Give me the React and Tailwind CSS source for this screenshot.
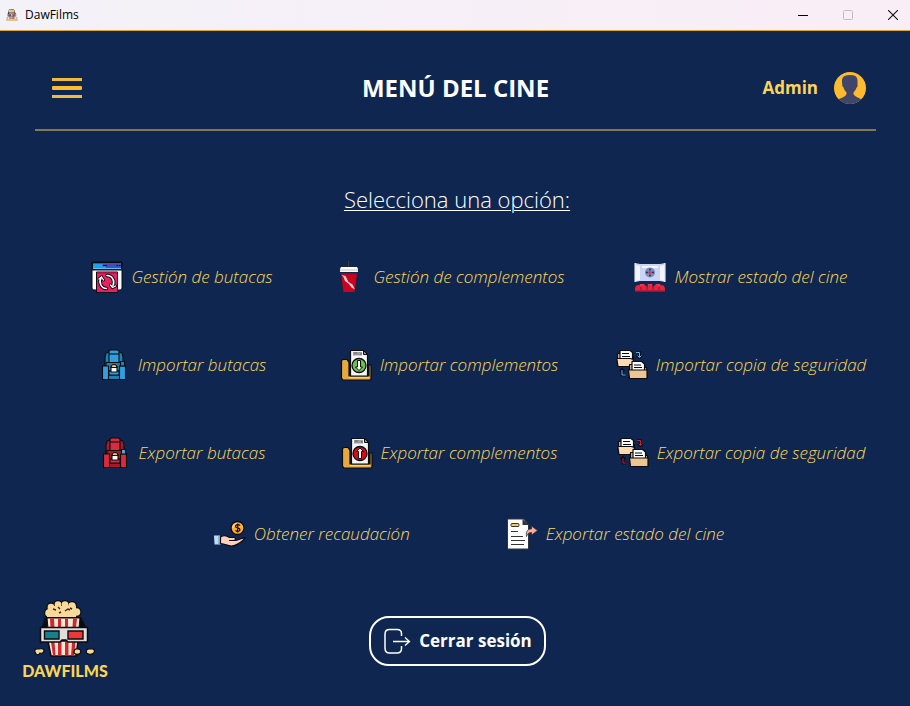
import React from "react";

const ink = "#0b0b12";

function Icon({ children }) {
  return (
    <svg viewBox="0 0 32 32" className="size-8 shrink-0" aria-hidden="true">
      {children}
    </svg>
  );
}

function SeatsManageIcon() {
  return (
    <Icon>
      <path d="M1 1h30v26a2 2 0 0 1-2 2H3a2 2 0 0 1-2-2z" fill="#fff" stroke={ink} />
      <path d="M1.500 1.500h29v7h-29z" fill="#3f51b5" stroke={ink} />
      <path d="M2 3h9.500v2.500H15V8H2z" fill="#1ea0ee" />
      <path d="M12 4.500h4" stroke={ink} />
      <path d="M25.500 4.500h1.500M28 4.500h1.500" stroke={ink} />
      <path d="M2 7.500h28" stroke="#4dc3ff" strokeWidth="1" />
      <path d="M1 9h30" stroke={ink} />
      <path d="M5.500 11h21v20.500h-21z" fill="#f01d62" stroke={ink} />
      <path d="M6 11.500h20V13H6z" fill="#c2185b" />
      <g fill="none" strokeLinecap="round">
        <path d="M10 17c-2.500 4 0 10.500 5.500 10.500M16 14.500c5.500 0 8 5.500 6 10" stroke={ink} strokeWidth="3.500" />
        <path d="M8 18l2.500-2 2 3M24.500 25l-3 1.500-2-2.500" stroke={ink} strokeWidth="3" />
        <path d="M10 17c-2.500 4 0 10.500 5.500 10.500M16 14.500c5.500 0 8 5.500 6 10" stroke="#fff" strokeWidth="1.600" />
        <path d="M8 18l2.500-2 2 3M24.500 25l-3 1.500-2-2.500" stroke="#fff" strokeWidth="1.300" />
      </g>
    </Icon>
  );
}

function SeatIcon({ body, dark, cup }) {
  return (
    <Icon>
      <g stroke={ink} strokeWidth="1.100">
        <path d="M8 4l4-1v14H7V8z" fill={dark} />
        <path d="M24 4l-4-1v14h5V8z" fill={dark} />
        <path d="M11 2l1.500-1h7L21 2v14H11z" fill={body} />
        <path d="M11 5h10" />
        <path d="M8 13.500h16V22H8z" fill={dark} />
        <path d="M9 26h14v4.500H9z" fill={dark} />
        <path d="M11 22h10v4H11z" fill={body} />
        <path d="M4.500 17h6v13.500h-6zM21.500 17h6v13.500h-6z" fill={body} />
        <path d="M22.500 12.500h4V17h-4z" fill={cup} />
        <path d="M13 18h6v5h-6z" fill="#fff" />
        <path d="M13 18.500c0-4 6-4 6 0z" fill="#f3c667" />
      </g>
    </Icon>
  );
}

function DrinkIcon() {
  return (
    <Icon>
      <path d="M15.500 0v6" stroke="#3b3b42" strokeWidth="1.300" />
      <path d="M8 6h16l1 2v3H7V8z" fill="#fff" />
      <path d="M7 9h18" stroke="#b9c2cd" />
      <path d="M8 12h16l-2.500 19h-11z" fill="#d0021b" />
      <path d="M8.500 14l4 1 3 6 4 2.500 2.500 5-3.500-2-2.500-3.500-4-3-1.500-4z" fill="#cfd5de" />
      <path d="M8 12h16l-.200 1.500H8.200z" fill="#98071b" />
    </Icon>
  );
}

function FolderFileIcon({ color, up }) {
  return (
    <Icon>
      <path d="M1.500 29V11.500l1.500-1h4l2 3V27h20V16h2v14l-1 1H3z" fill="#e8a93c" stroke={ink} strokeWidth="1.200" />
      <path d="M9 28.500h20" stroke="#f7cf7b" strokeWidth="1.500" />
      <path d="M10.500 1.500h13l4 4V27h-17z" fill="#f4f5f7" stroke={ink} strokeWidth="1.200" />
      <path d="M13 3h9v3.500h-9z" fill="#9b9da3" />
      <path d="M14 4h3M20 5h2" stroke="#62646b" />
      <path d="M23.500 1.500v4h4z" fill="#8d9098" stroke={ink} />
      <circle cx="19" cy="16.500" r="7" fill={color} stroke={ink} strokeWidth="1.300" />
      <g fill="#fff" stroke={ink} strokeWidth="1">
        {up ? (
          <path d="M17.500 21.500v-7H15.500l3.500-3.500 3.500 3.500h-2v7z" />
        ) : (
          <path d="M17.500 11.500v6.500H15.500l3.500 3.500 3.500-3.500h-2v-6.500z" />
        )}
      </g>
    </Icon>
  );
}

function ScreenIcon() {
  return (
    <Icon>
      <path d="M1 2l5 1h20l5-1v19l-5-1H6l-5 1z" fill="#c9d6f7" />
      <path d="M2 4l4 1v14l-4 1zM30 4l-4 1v14l4 1zM8 5h16v2H8z" fill="#f3f6ff" />
      <path d="M1 2v19M31 2v19" stroke="#fff" />
      <circle cx="16" cy="11.500" r="5" fill="#7f8cbb" />
      <g fill="#26345d">
        <circle cx="16" cy="8.500" r="1" />
        <circle cx="16" cy="14.500" r="1" />
        <circle cx="13" cy="11.500" r="1" />
        <circle cx="19" cy="11.500" r="1" />
      </g>
      <circle cx="16" cy="11.500" r="1.600" fill="#d9344a" />
      <path d="M5.500 23h5l-1 4h-3zM13.500 23h5l-1 4h-3zM21.500 23h5l-1 4h-3z" fill="#f0384f" />
      <path d="M1 28c0-5 6-5 6-1 0-4 6-4 6 0 0-4 6-4 6 0 0-4 6-4 6 0 0-4 6-4 6 1v2.500H1z" fill="#e6243f" />
      <path d="M7 26v3M13 26v3M19 26v3M25 26v3M1 30h30" stroke="#8e1034" />
    </Icon>
  );
}

function BackupIcon({ arrow }) {
  return (
    <Icon>
      <g strokeLinejoin="round" stroke={ink} strokeWidth="1.200">
        <path d="M1.500 17V4.500h5l2 3h9V17z" fill="#e7b98c" />
        <path d="M4 10V1.500h10l2.500 2V10z" fill="#fff" />
        <path d="M6 4.500h7M6 7.500h8" />
        <path d="M.800 9.500h13.500l3 1V17.500H2z" fill="#ffd9b0" />
        <path d="M13.500 29V15.500h4l2 3h11V29z" fill="#e7b98c" />
        <path d="M16 22v-9.500h9.500l3 2.500v7z" fill="#fff" />
        <path d="M18 16h7M18 18.500h8" />
        <path d="M12.500 21h18.500v8.500H13.500z" fill="#efc592" />
      </g>
      <g fill="none">
        <path d="M20 3.500h3.500V8M21 6.500l2.500 2 2.500-2M9.500 26H6v-5M4 22.500l2-2 2 2" stroke={ink} strokeWidth="2.600" />
        <path d="M20 3.500h3.500V8M21.500 6.500l2 2 2-2M9.500 26H6v-5" stroke={arrow} strokeWidth="1" />
      </g>
    </Icon>
  );
}

function MoneyHandIcon() {
  return (
    <Icon>
      <circle cx="23.500" cy="10" r="6.500" fill="#ffad33" stroke={ink} strokeWidth="1.300" />
      <path d="M19 10a4.500 4.500 0 0 1 4.500-4.500" stroke="#ffd27a" strokeWidth="1.500" fill="none" />
      <path d="M26 7.500c-1-1.300-4.500-1.300-4.500.700 0 2.500 4.500 1 4.500 3.500 0 2-3.500 2-4.500.600M23.700 5.500v9" fill="none" stroke={ink} strokeWidth="1.200" />
      <path d="M0 17.500h6v9H.500z" fill="#b9dcfa" />
      <path d="M5 17.500v8.500h2" stroke="#718aa5" fill="none" />
      <path d="M6.500 19c4-3 7-1 9 .500h4.500c2 0 2 3-.500 3h-4 5c4 0 7-3 11-2.500-3 3-8 8-14 8-4 0-6-2-11-2.500z" fill="#ffd0be" stroke={ink} strokeWidth="1.200" strokeLinejoin="round" />
    </Icon>
  );
}

function ExportDocIcon() {
  return (
    <Icon>
      <path d="M1.500 1h16l5 5.500V31h-21z" fill="#fff" stroke="#30343d" />
      <path d="M16.500 1l6.500 6h-6.500z" fill="#30343d" />
      <rect x="5" y="5.500" width="8" height="3" rx="1" fill="#ffc35b" stroke="#30343d" />
      <path d="M5 13.500h7M5 18.500h12M5 22.500h14M5 26.500h13" stroke="#30343d" />
      <path d="M20.500 18.500c-1-6 2-7.500 5-7.500V8l6 4.500-6 4.500v-2.500c-2.500 0-4 1-5 4z" fill="#ffad9b" stroke="#30343d" strokeWidth=".800" />
    </Icon>
  );
}

function AvatarIcon() {
  return (
    <svg viewBox="0 0 32 32" className="size-8" aria-hidden="true">
      <defs>
        <clipPath id="avatar-disc"><circle cx="16" cy="16" r="16" /></clipPath>
      </defs>
      <circle cx="16" cy="16" r="16" fill="#fdbb2d" />
      <path clipPath="url(#avatar-disc)" d="M8.500 6Q10 3 16 3q8 0 7.500 6v3.500q.500 2-1 3.200-1 3-3 4.800V22q1 2.500 7.500 5v6H5v-6q7-2.500 7.500-5v-1.500Q10 18 9.500 15.500 8 14.500 8.300 12.500 7.500 9 8.500 6z" fill="#414668" />
    </svg>
  );
}

function MascotIcon({ className }) {
  const bumps = [[16, 13, 4.5], [18, 7, 4], [25, 4.5, 4], [32, 4.5, 4], [39, 6, 4.5], [43.500, 12, 4.5]];
  return (
    <svg viewBox="0 0 64 57" className={className} aria-hidden="true">
      <path d="M12 17h36l6 12H8z" fill={ink} />
      <g fill={ink}>
        {bumps.map(([x, y, r]) => (
          <circle key={x} cx={x} cy={y} r={r + 0.5} />
        ))}
      </g>
      <g fill="#f8d998">
        {bumps.map(([x, y, r]) => (
          <circle key={x} cx={x} cy={y} r={r - 0.7} />
        ))}
        <path d="M15 6h28v11H14z" />
      </g>
      <path d="M20 9l3 1M32 11l3-2 2 1M25 7l2 2M37 8l2 1M26 13l2-1" stroke="#3a2616" strokeWidth="1.400" fill="none" />
      <path d="M14 18h33l-1 10H15z" fill="#f3ead6" stroke={ink} />
      <path d="M17 18.500h4l.500 9h-4zM25 18.500h3v9h-3zM32 18.500h3v9h-3zM40 18.500h4l-1 9h-3.500z" fill="#d3262c" />
      <path d="M15 41h30l-2 15H18z" fill="#f3ead6" stroke={ink} strokeWidth="1.500" />
      <path d="M18 42h3.500l1 13.500H20zM25 42h3.500v13.500H25zM32 42h3.500v13.500H32zM39 42h3.500l-1.500 13.500h-3z" fill="#d3262c" />
      <path d="M7.500 27.500h47V42H35l-2-2h-4l-2 2H7.500z" fill="#dfdedb" stroke={ink} strokeWidth="1.500" />
      <path d="M11.500 31H26v8H11.500z" fill="#16808b" stroke={ink} strokeWidth="1.400" />
      <path d="M35 31h15v8H35z" fill="#ee3838" stroke={ink} strokeWidth="1.400" />
      <g fill="#f8d998" stroke={ink} strokeWidth="1.200">
        <path d="M2 52q-1-4 4-3 5-1 5 2-1 3-4 2-3 4-5-1z" />
        <path d="M41 53q0-5 3.500-4 4 0 3 4-3 3-6.500 0z" />
        <path d="M53.500 53q-1-5 4-4 4-1 4 3-3 4-8 1z" />
      </g>
    </svg>
  );
}

function Option({ icon, children }) {
  return (
    <button type="button" className="flex cursor-pointer items-center justify-center gap-2 whitespace-nowrap text-[17px] leading-8 font-[350] text-[#fbd85d] italic">
      {icon}
      <span>{children}</span>
    </button>
  );
}

function TitleBar() {
  return (
    <div className="flex h-[31px] items-center border-b border-[#d9a632] bg-linear-to-r from-[#f3f2f8] to-[#faedf6] pl-1.5 text-black">
      <div className="flex flex-col items-center border-b-2 border-[#dcc68c]">
        <MascotIcon className="h-2.5 w-3" />
      </div>
      <span className="ml-[7px] flex-1 text-xs">DawFilms</span>
      <button type="button" aria-label="Minimizar" className="flex h-full w-[45px] items-center justify-center">
        <svg viewBox="0 0 10 10" className="size-2.5"><path d="M0 5.500h10" stroke="#000" /></svg>
      </button>
      <button type="button" aria-label="Maximizar" disabled className="flex h-full w-[45px] items-center justify-center">
        <svg viewBox="0 0 10 10" className="size-2.5"><rect x=".5" y=".5" width="9" height="9" rx="1" fill="none" stroke="#c6bcc6" /></svg>
      </button>
      <button type="button" aria-label="Cerrar" className="flex h-full w-10 items-center justify-start pl-[18px]">
        <svg viewBox="0 0 10 10" className="size-2.5"><path d="M0 0l10 10M10 0L0 10" stroke="#111" strokeWidth="1.100" /></svg>
      </button>
    </div>
  );
}

export default function App() {
  const blue = { body: "#2f9fe0", dark: "#1f7fae", cup: "#2585b5" };
  const red = { body: "#d82b3c", dark: "#a8182b", cup: "#5fa6c9" };
  return (
    <div className="flex min-h-screen flex-col bg-[#0e2650] font-['Open_Sans','Noto_Sans',sans-serif]">
      <TitleBar />
      <header className="mr-[34px] ml-[35px] grid grid-cols-[1fr_auto_1fr] items-center border-b-2 border-[#857654] px-2.5 pt-[41px] pb-[25px]">
        <button type="button" aria-label="Menú" className="ml-[7px] justify-self-start">
          <svg viewBox="0 0 30 20" className="h-5 w-[30px]">
            <path d="M0 0h30v3H0zM0 17h30v3H0z" fill="#f0ba3f" />
            <rect y="8" width="30" height="4" rx="1" fill="#fdbb2d" />
          </svg>
        </button>
        <h1 className="text-2xl font-bold text-white">MENÚ DEL CINE</h1>
        <button type="button" className="flex items-center gap-4 justify-self-end text-[17px] font-bold text-[#fbd45b]">
          Admin
          <AvatarIcon />
        </button>
      </header>

      <main className="flex flex-1 flex-col">
        <h2 className="mt-[52px] pl-1 text-center text-[22px] leading-8 font-light text-white underline decoration-1 underline-offset-2">Selecciona una opción:</h2>
        <div className="mt-[46px] grid grid-cols-[268fr_266fr_318fr] gap-y-14 pr-2.5 pl-12">
          <Option icon={<SeatsManageIcon />}>Gestión de butacas</Option>
          <Option icon={<DrinkIcon />}>Gestión de complementos</Option>
          <Option icon={<ScreenIcon />}>Mostrar estado del cine</Option>
          <Option icon={<SeatIcon {...blue} />}>Importar butacas</Option>
          <Option icon={<FolderFileIcon color="#6cc04a" />}>Importar complementos</Option>
          <Option icon={<BackupIcon arrow="#5fb4ea" />}>Importar copia de seguridad</Option>
          <Option icon={<SeatIcon {...red} />}>Exportar butacas</Option>
          <Option icon={<FolderFileIcon color="#e30613" up />}>Exportar complementos</Option>
          <Option icon={<BackupIcon arrow="#c8202c" />}>Exportar copia de seguridad</Option>
        </div>
        <div className="mt-[49px] flex justify-center gap-24 pl-7">
          <Option icon={<MoneyHandIcon />}>Obtener recaudación</Option>
          <Option icon={<ExportDocIcon />}>Exportar estado del cine</Option>
        </div>
      </main>

      <footer className="grid grid-cols-[1fr_auto_1fr] items-start pb-[21px] pl-[5px]">
        <div className="flex w-[120px] flex-col items-center">
          <MascotIcon className="h-[57px] w-16" />
          <span className="font-['Lato'] text-base leading-7 font-black text-[#f9d557]">DAWFILMS</span>
        </div>
        <button type="button" className="mt-4 flex h-[50px] items-center gap-2 rounded-[20px] border-2 border-white px-3 text-[17px] font-bold text-white">
          <svg viewBox="0 0 28 28" className="size-7" fill="none" stroke="#fff" strokeWidth="1.500" aria-hidden="true">
            <path d="M18.500 9V6.500q0-4-4.500-4H6.500Q2 2.500 2 7v14q0 5 4.500 5H14q4.500 0 4.500-4.500V19" />
            <path d="M10 14.500h16M22 10.500l4.500 4-4.500 4" strokeWidth="1.300" />
          </svg>
          Cerrar sesión
        </button>
      </footer>
    </div>
  );
}
